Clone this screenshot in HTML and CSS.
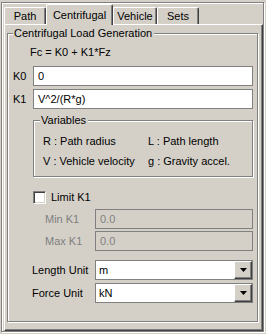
FILE: index.html
```html
<!DOCTYPE html>
<html>
<head>
<meta charset="utf-8">
<link rel="stylesheet" href="styles.css">
</head>
<body>
<div class="frame">
  <div class="tabs">
    <div class="tab t-path">Path</div>
    <div class="tab t-centri active">Centrifugal</div>
    <div class="tab t-vehicle">Vehicle</div>
    <div class="tab t-sets">Sets</div>
  </div>
  <div class="panel">
    <fieldset class="group main">
      <legend>Centrifugal Load Generation</legend>
      <div class="formula">Fc = K0 + K1*Fz</div>
      <div class="krow k0"><span class="klabel">K0</span><div class="field">0</div></div>
      <div class="krow"><span class="klabel">K1</span><div class="field">V^2/(R*g)</div></div>
      <fieldset class="group vars">
        <legend>Variables</legend>
        <div class="vgrid">
          <span>R : Path radius</span><span>L : Path length</span>
          <span>V : Vehicle velocity</span><span>g : Gravity accel.</span>
        </div>
      </fieldset>
      <div class="check"><span class="box"></span><span>Limit K1</span></div>
      <div class="frow first"><span class="flabel dis indent">Min K1</span><div class="field disabled">0.0</div></div>
      <div class="frow tight"><span class="flabel dis indent">Max K1</span><div class="field disabled">0.0</div></div>
      <div class="frow units"><span class="flabel">Length Unit</span>
        <div class="combo"><span class="val">m</span><span class="btn"><svg width="7" height="4" viewBox="0 0 7 4"><path d="M0 0H7L3.5 4Z" fill="#000"/></svg></span></div>
      </div>
      <div class="frow"><span class="flabel">Force Unit</span>
        <div class="combo"><span class="val">kN</span><span class="btn"><svg width="7" height="4" viewBox="0 0 7 4"><path d="M0 0H7L3.5 4Z" fill="#000"/></svg></span></div>
      </div>
    </fieldset>
  </div>
</div>
</body>
</html>
```

FILE: styles.css
```css
html, body {
  margin: 0;
  padding: 0;
  background: #d4d0c8;
}
body {
  width: 266px;
  height: 334px;
  overflow: hidden;
  font-family: "Liberation Sans", Arial, sans-serif;
  font-size: 11px;
  line-height: 13px;
  color: #000;
}
.frame {
  box-sizing: border-box;
  margin: 2px 0 0 1px;
  width: 263px;
  height: 330px;
  border: 1px solid #808080;
  box-shadow: inset 1px 1px 0 #fff, 1px 1px 0 #fff;
  padding: 1px 0 0 2px;
  display: flex;
  flex-direction: column;
}
.tabs {
  display: flex;
  height: 20px;
  align-items: flex-end;
  position: relative;
  z-index: 1;
}
.tab {
  box-sizing: border-box;
  height: 17px;
  border-top: 1px solid #fff;
  border-left: 1px solid #fff;
  border-right: 1px solid #404040;
  box-shadow: inset -1px 0 0 #808080;
  border-top-left-radius: 2px;
  border-top-right-radius: 2px;
  text-align: center;
  padding-top: 2px;
}
.t-path { width: 42px; }
.t-centri { width: 67px; }
.t-vehicle { width: 44px; }
.t-sets { width: 42px; }
.tab.active {
  height: 21px;
  margin-bottom: -1px;
  background: #d4d0c8;
  padding-top: 4px;
}
.panel {
  box-sizing: border-box;
  flex: 1;
  border-top: 1px solid #fff;
  border-left: 1px solid #fff;
  border-right: 1px solid #404040;
  border-bottom: 1px solid #404040;
  box-shadow: inset -1px -1px 0 #808080;
  padding: 2px 3px 0 2px;
}
.group {
  margin: 0;
  padding: 0;
  min-inline-size: 0;
  border: 1px solid #808080;
  box-shadow: inset 1px 1px 0 #fff, 1px 1px 0 #fff;
}
.group legend {
  padding: 0 2px 0 1px;
  background: #d4d0c8;
  line-height: 13px;
}
.main {
  width: 251px;
  height: 295px;
  box-sizing: border-box;
}
.main legend {
  margin-left: 5px;
}
.formula {
  margin: 6px 0 0 22px;
}
.krow {
  display: flex;
  align-items: center;
  margin-top: 3px;
}
.krow.k0 {
  margin-top: 7px;
}
.klabel {
  width: 25px;
  padding-left: 5px;
  box-sizing: border-box;
}
.field {
  box-sizing: border-box;
  width: 220px;
  height: 20px;
  border: 1px solid #808080;
  background: #fff;
  padding: 3px 0 0 4px;
}
.field.disabled {
  width: 158px;
  background: #d4d0c8;
  color: #808080;
}
.vars {
  margin: 5px 0 0 25px;
  width: 220px;
  height: 63px;
  box-sizing: border-box;
}
.vars legend {
  margin-left: 6px;
}
.vgrid {
  display: grid;
  grid-template-columns: 105px auto;
  row-gap: 7px;
  padding: 8px 0 0 9px;
}
.check {
  display: flex;
  align-items: center;
  gap: 5px;
  margin: 14px 0 0 25px;
}
.box {
  box-sizing: border-box;
  width: 13px;
  height: 13px;
  background: #fff;
  border-top: 1px solid #808080;
  border-left: 1px solid #808080;
  border-right: 1px solid #fff;
  border-bottom: 1px solid #fff;
  box-shadow: inset 1px 1px 0 #404040, inset -1px -1px 0 #d4d0c8;
}
.frow {
  display: flex;
  align-items: center;
  margin-top: 3px;
}
.frow.first {
  margin-top: 5px;
}
.frow.tight {
  margin-top: 2px;
}
.frow.units {
  margin-top: 9px;
}
.flabel {
  width: 87px;
  padding-left: 24px;
  box-sizing: border-box;
}
.flabel.indent {
  padding-left: 37px;
}
.dis {
  color: #808080;
}
.combo {
  box-sizing: border-box;
  width: 158px;
  height: 20px;
  border: 1px solid #808080;
  background: #fff;
  display: flex;
  align-items: stretch;
}
.combo .val {
  flex: 1;
  padding: 3px 0 0 3px;
}
.combo .btn {
  box-sizing: border-box;
  width: 18px;
  background: #d4d0c8;
  border-top: 1px solid #fff;
  border-left: 1px solid #fff;
  border-right: 1px solid #404040;
  border-bottom: 1px solid #404040;
  box-shadow: inset -1px -1px 0 #808080;
  display: flex;
  align-items: center;
  justify-content: center;
}
```
